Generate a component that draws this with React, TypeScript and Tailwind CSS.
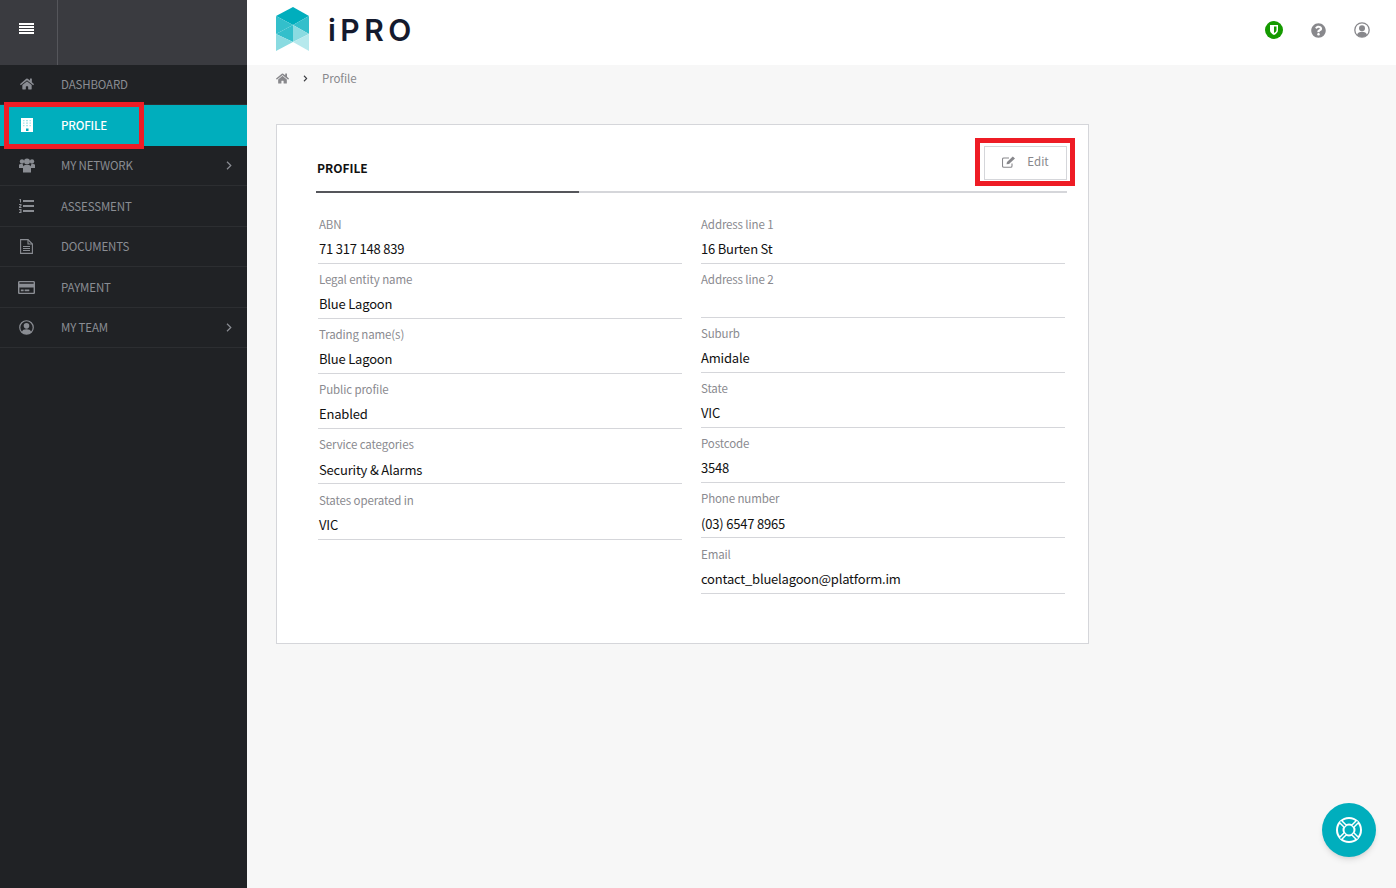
import React from "react";
import { FaHome, FaRegCreditCard, FaQuestionCircle, FaChevronRight } from "react-icons/fa";

const font = "font-['Noto_Sans_CJK_SC','Noto_Sans',sans-serif]";

function UserRing({ size }: { size: number }) {
  return (
    <svg width={size} height={size} viewBox="0 0 16 16">
      <circle cx="8" cy="8" r="7.200" fill="none" stroke="currentColor" strokeWidth="1.300" />
      <circle cx="8" cy="6.200" r="3" fill="currentColor" />
      <path d="M3 13C3.500 10.500 5.500 9.800 8 9.800S12.500 10.500 13 13C11.500 14.500 9.800 15 8 15S4.500 14.500 3 13Z" fill="currentColor" />
    </svg>
  );
}

function UsersIcon() {
  return (
    <svg width="16" height="15" viewBox="0 0 16 15" fill="currentColor">
      <circle cx="3" cy="3.500" r="2.200" />
      <circle cx="13" cy="3.500" r="2.200" />
      <circle cx="8" cy="3.600" r="3" />
      <path d="M0 10V7C0 6 1 6 3 6C3.500 6 4 6.200 4 6.500V10Z" />
      <path d="M16 10V7C16 6 15 6 13 6C12.500 6 12 6.200 12 6.500V10Z" />
      <path d="M4 14.500V9C4 7.500 5 7 8 7S12 7.500 12 9V14.500Z" />
    </svg>
  );
}

function BuildingIcon() {
  return (
    <svg width="12" height="14" viewBox="0 0 12 14">
      <path d="M0 0H12V14H0Z" fill="#fff" />
      <path d="M2 2H3.500V3.200H2ZM5 2H7V3.200H5ZM8.500 2H10V3.200H8.500ZM2 4.500H3.500V5.700H2ZM5 4.500H7V5.700H5ZM8.500 4.500H10V5.700H8.500ZM2 7H3.500V8.200H2ZM5 7H7V8.200H5ZM8.500 7H10V8.200H8.500Z" fill="#a8e4e9" />
      <path d="M5 10.500H7.500V13H5Z" fill="#00aebd" />
    </svg>
  );
}

function ListIcon() {
  return (
    <svg width="15" height="14" viewBox="0 0 15 14" fill="currentColor">
      <path d="M4 1H15V3H4ZM4 6H15V8H4ZM4 11H15V13H4Z" />
      <path d="M0.500 0H2V3.500H1V1H0.500ZM0 5H2.500V6.800L1.200 8H2.500V9H0V7.700L1.500 6.300V6H0ZM0 10H2.500V14H0V13H1.500V12.500H0.700V11.500H1.500V11H0Z" />
    </svg>
  );
}

function DocIcon() {
  return (
    <svg width="13" height="15" viewBox="0 0 13 15" fill="none" stroke="currentColor" strokeWidth="1.100">
      <path d="M0.600 0.600H8L12.400 5V14.400H0.600Z" />
      <path d="M8 0.600V5H12.400M3 7.500H10M3 9.500H10M3 11.500H10" />
    </svg>
  );
}

function EditIcon() {
  return (
    <svg width="14" height="12" viewBox="0 0 14 12" fill="none" stroke="currentColor">
      <path d="M10 7.500V10C10 10.800 9.500 11.300 8.700 11.300H1.800C1 11.300 0.500 10.800 0.500 10V3.300C0.500 2.500 1 2 1.800 2H7" strokeWidth="1.100" />
      <path d="M4.500 8.300L5 6L10.800 0.500L13 2.600L7 8Z" fill="currentColor" stroke="none" />
    </svg>
  );
}

function Chevron() {
  return (
    <svg width="6" height="9" viewBox="0 0 6 9" fill="none" stroke="currentColor" strokeWidth="1.200">
      <path d="M1 0.800L4.800 4.500L1 8.200" />
    </svg>
  );
}

type Nav = { label: string; icon: React.ReactNode; chev?: boolean; active?: boolean; h: string };
const nav: Nav[] = [
  { label: "DASHBOARD", icon: <FaHome size={14} />, h: "h-[40px] pb-[1px]" },
  { label: "PROFILE", icon: <BuildingIcon />, active: true, h: "h-[41px]" },
  { label: "MY NETWORK", icon: <UsersIcon />, chev: true, h: "h-[40px] pb-[1px]" },
  { label: "ASSESSMENT", icon: <ListIcon />, h: "h-[41px]" },
  { label: "DOCUMENTS", icon: <DocIcon />, h: "h-[40px] pb-[1px]" },
  { label: "PAYMENT", icon: <FaRegCreditCard size={17} />, h: "h-[41px]" },
  { label: "MY TEAM", icon: <UserRing size={15} />, chev: true, h: "h-[40px] pb-[1px]" },
];

type F = [string, string, string, string];
const left: F[] = [
  ["ABN", "71 317 148 839", "h-[48px]", "mt-[8px]"],
  ["Legal entity name", "Blue Lagoon", "h-[48px]", "mt-[8px]"],
  ["Trading name(s)", "Blue Lagoon", "h-[48px]", "mt-[8px]"],
  ["Public profile", "Enabled", "h-[48px]", "mt-[8px]"],
  ["Service categories", "Security & Alarms", "h-[48px]", "mt-[9px]"],
  ["States operated in", "VIC", "h-[49px] pt-[1px]", "mt-[8px]"],
];
const right: F[] = [
  ["Address line 1", "16 Burten St", "h-[48px]", "mt-[8px]"],
  ["Address line 2", "", "h-[47px]", "mt-[8px]"],
  ["Suburb", "Amidale", "h-[48px]", "mt-[8px]"],
  ["State", "VIC", "h-[48px]", "mt-[8px]"],
  ["Postcode", "3548", "h-[48px]", "mt-[8px]"],
  ["Phone number", "(03) 6547 8965", "h-[48px]", "mt-[9px]"],
  ["Email", "contact_bluelagoon@platform.im", "h-[49px] pt-[1px]", "mt-[8px]"],
];

function Field({ f, inset }: { f: F; inset: string }) {
  return (
    <div className={`${f[2]} ${inset} mb-[7px] flex w-[364px] flex-col border-b border-[#d5d6da]`}>
      <div className="text-[11.5px] leading-[16px] tracking-[-0.12px] text-[#8a8a8f]">{f[0]}</div>
      <div className={`${f[3]} text-[13px] leading-[18px] tracking-[-0.2px] text-[#111]`}>{f[1]}</div>
    </div>
  );
}

function Logo() {
  return (
    <svg width="34" height="46" viewBox="0 0 34 46">
      <path d="M0 9L17 0L33 9L17 18Z" fill="#00aebd" />
      <path d="M0 9L17 18L0 27Z" fill="#33bfcb" />
      <path d="M33 9L17 18L33 27Z" fill="#33bfcb" />
      <path d="M0 27L17 18V35Z" fill="#33bfcb" />
      <path d="M33 27L17 18V35Z" fill="#8adbe1" />
      <path d="M0 27L17 35L0 44Z" fill="#8adbe1" />
      <path d="M33 27L17 35L33 44Z" fill="#b6e9ed" />
    </svg>
  );
}

export default function App() {
  return (
    <div className={`${font} relative flex h-[888px] w-[1396px] overflow-hidden bg-[#f7f7f7]`}>
      <aside className="flex w-[247px] shrink-0 flex-col bg-[#202225]">
        <div className="flex h-[65px] bg-[#3a3b40]">
          <div className="flex w-[58px] items-center justify-center border-r border-[#55565b] pb-[9px] pr-[4px]">
            <div className="flex w-[15px] flex-col gap-[1px]">
              <span className="h-[2px] bg-white" />
              <span className="h-[2px] bg-white" />
              <span className="h-[2px] bg-white" />
              <span className="h-[2px] bg-white" />
            </div>
          </div>
        </div>
        {nav.map((n) => (
          <div
            key={n.label}
            className={`${n.h} flex items-center border-b ${n.active ? "border-[#00aebd] bg-[#00aebd] text-white" : "border-[#2c2e31] text-[#8a8d93]"}`}
          >
            <span className="flex w-[53px] justify-center">{n.icon}</span>
            <span className={`ml-[8px] flex-1 text-[11.5px] leading-[16px] tracking-[-0.15px] ${n.active ? "font-medium" : ""}`}>{n.label}</span>
            {n.chev && <span className="mr-[15px] flex"><Chevron /></span>}
          </div>
        ))}
      </aside>

      <div className="flex min-w-0 flex-1 flex-col">
        <header className="flex h-[65px] items-center justify-between bg-white pb-[5px] pl-[29px] pr-[25px]">
          <div className="flex items-center">
            <Logo />
            <span className="ml-[18px] font-['Inter',sans-serif] text-[30px] font-semibold tracking-[4.500px] text-[#141a2e]">iPRO</span>
          </div>
          <div className="flex items-center gap-[26px] text-[#88888c]">
            <span className="flex h-[18px] w-[18px] items-center justify-center rounded-full bg-[#159a00]">
              <svg width="8" height="10" viewBox="0 0 8 10"><path d="M0 0H8V5C8 7.500 6 9 4 10C2 9 0 7.500 0 5Z" fill="#fff" /><path d="M4 1.500H6.500V5C6.500 6.500 5 7.500 4 8Z" fill="#159a00" /></svg>
            </span>
            <span className="flex w-[18px] justify-center"><FaQuestionCircle size={15} /></span>
            <span className="flex w-[18px] justify-center"><UserRing size={16} /></span>
          </div>
        </header>
        <div className="flex h-[27px] items-center pl-[29px] text-[11.5px] tracking-[-0.1px] text-[#88888c]">
          <FaHome size={13} />
          <FaChevronRight size={7} className="ml-[13px] text-[#3a3b40]" />
          <span className="ml-[13px]">Profile</span>
        </div>
        <main className="pl-[29px] pt-[32px]">
          <section className="h-[520px] w-[813px] border border-[#d5d6da] bg-white pl-[39px] pr-[21px]">
            <div className="relative flex h-[68px] items-start justify-between border-b-2 border-[#d5d6da]">
              <div className="absolute bottom-[-2px] left-0 h-[2px] w-[263px] bg-[#55565b]" />
              <div className="ml-[1px] mt-[33px] text-[12px] font-bold leading-[20px] text-[#111]">PROFILE</div>
              <button className="mt-[21px] flex h-[34px] w-[83px] items-center justify-center gap-[11px] border border-[#d5d6da] pb-[2px] text-[11.5px] text-[#88888c]">
                <EditIcon />
                Edit
              </button>
            </div>
            <div className="mt-[23px] flex gap-[18px] pl-[2px]">
              <div className="flex flex-col">{left.map((f) => <Field key={f[0]} f={f} inset="pl-[1px]" />)}</div>
              <div className="ml-[1px] flex flex-col">{right.map((f) => <Field key={f[0]} f={f} inset="" />)}</div>
            </div>
          </section>
        </main>
      </div>

      <div className="absolute left-[4px] top-[102px] h-[47px] w-[140px] border-[5px] border-[#ee1c25]" />
      <div className="absolute left-[975px] top-[138px] h-[48px] w-[100px] border-[5px] border-[#ee1c25]" />

      <div className="absolute left-[1322px] top-[803px] flex h-[54px] w-[54px] items-center justify-center rounded-full bg-[#00aebd] shadow-md">
        <svg width="28" height="28" viewBox="0 0 28 28" fill="none" stroke="#fff" strokeWidth="2">
          <circle cx="14" cy="14" r="12" />
          <circle cx="14" cy="14" r="5.500" />
          <path d="M5.500 5.500L10 10M22.500 5.500L18 10M5.500 22.500L10 18M22.500 22.500L18 18" strokeWidth="4.500" />
          <path d="M5.500 5.500L10 10M22.500 5.500L18 10M5.500 22.500L10 18M22.500 22.500L18 18" stroke="#00aebd" strokeWidth="1.500" />
        </svg>
      </div>
    </div>
  );
}
